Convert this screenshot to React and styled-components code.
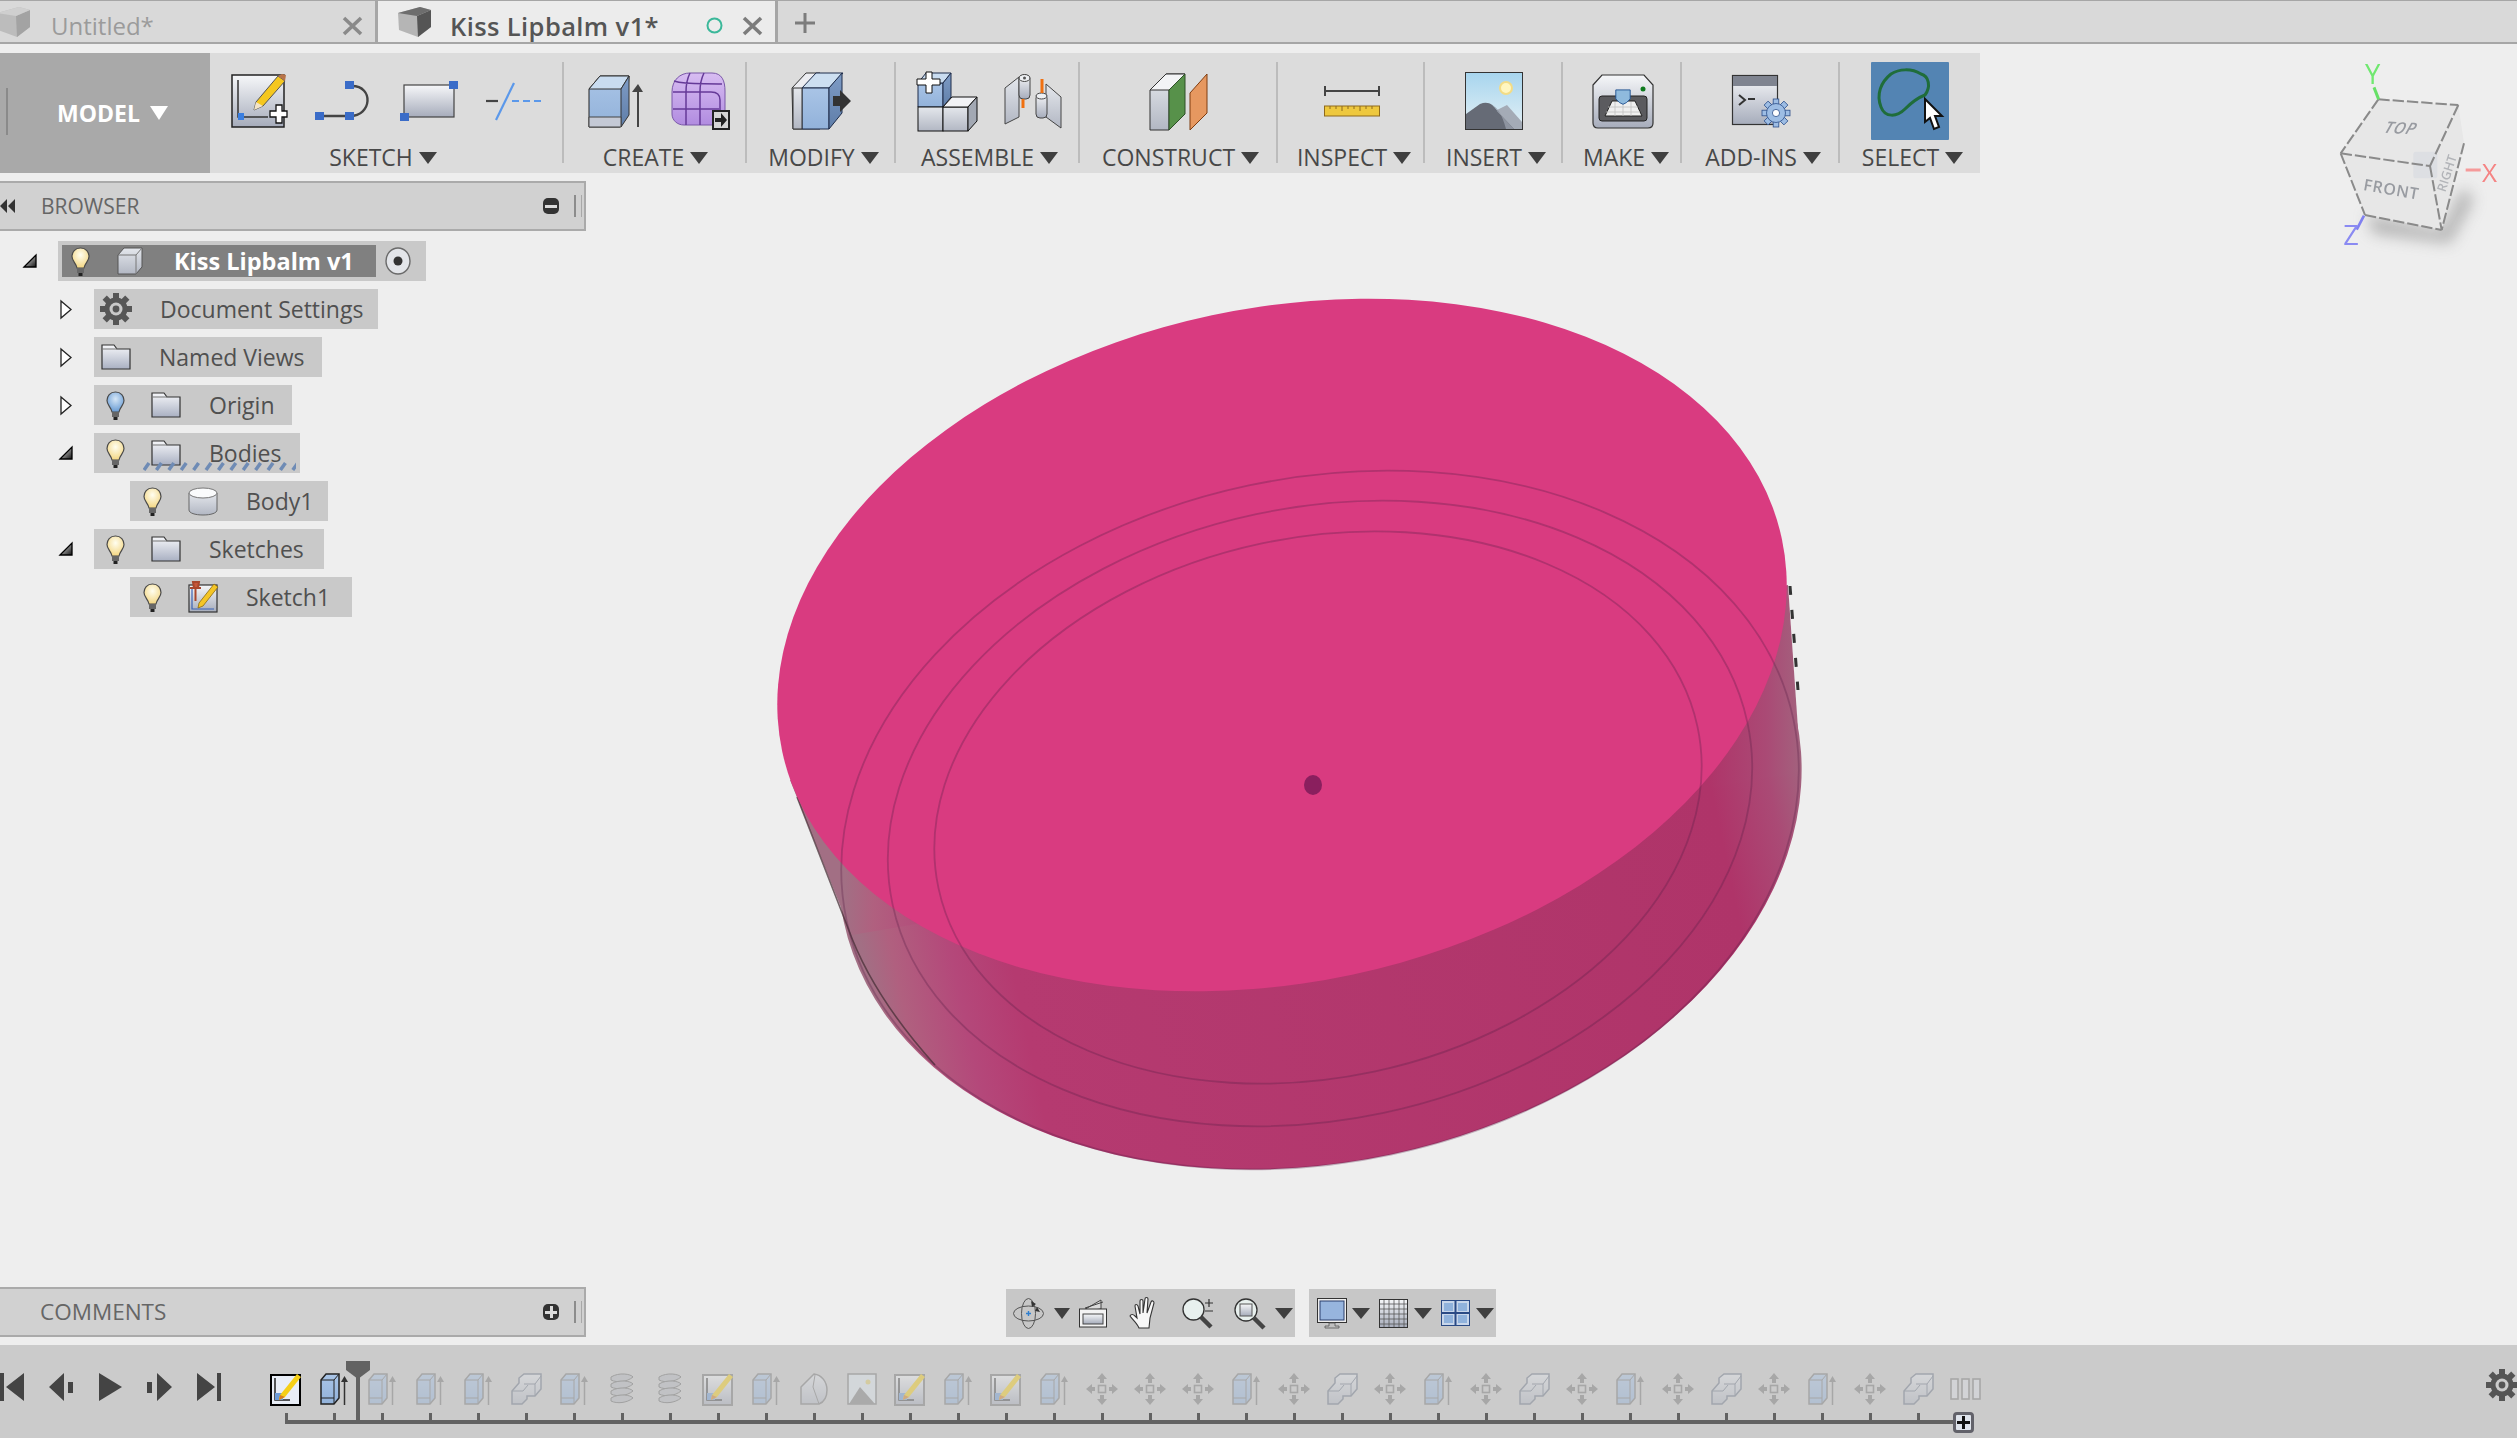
import React from "react";
import styled, { createGlobalStyle } from "styled-components";

const Global = createGlobalStyle`
  html, body { margin: 0; padding: 0; background: #eeeeee; }
  body { font-family: "Open Sans", "Liberation Sans", sans-serif; }
`;

const Page = styled.div`
  width: 2517px; height: 1438px; overflow: hidden; background: #eeeeee;
  display: flex; flex-direction: column; position: relative;
`;
const Ico = styled.svg`display: block; flex: none; overflow: visible;`;
const Hidden = styled.svg`position: absolute; width: 0; height: 0;`;

/* ---------- tabs ---------- */
const TabBar = styled.div`
  height: 44px; box-sizing: border-box; display: flex; flex: none;
  background: #d9d9d9; border-top: 1px solid #a6a6a6; border-bottom: 2px solid #a6a6a6;
`;
const Tab = styled.div`
  width: ${p => p.$w}px; box-sizing: border-box; display: flex; align-items: center;
  padding-left: ${p => p.$pl}px; border-right: 3px solid #a6a6a6;
  background: ${p => (p.$active ? "#ececec" : "#d9d9d9")};
`;
const TabTitle = styled.span`
  font-size: ${p => (p.$active ? 25.5 : 24)}px; line-height: 30px; margin-left: ${p => p.$ml}px; margin-top: 8px;
  color: ${p => (p.$active ? "#555555" : "#9b9b9b")};
  font-weight: ${p => (p.$active ? 600 : 400)};
  letter-spacing: ${p => (p.$active ? "0.4px" : "0")};
`;
const TabRight = styled.div`margin-left: auto; margin-top: 8px; display: flex; align-items: center; gap: 19px; padding-right: ${p => p.$pr}px;`;
const AddTab = styled.div`padding: 3px 0 0 17px; display: flex; align-items: center;`;

/* ---------- workspace ---------- */
const Workspace = styled.div`flex: 1; display: flex; flex-direction: column; position: relative; min-height: 0;`;
const ModelCanvas = styled.svg`position: absolute; left: 760px; top: 236px; width: 1060px; height: 940px;`;
const CubeCanvas = styled.svg`position: absolute; right: 0; top: 6px; width: 217px; height: 210px;`;

const Toolbar = styled.div`
  margin-top: 9px; width: 1980px; height: 120px; flex: none; display: flex; background: #dcdcdc;
`;
const ModelButton = styled.div`
  width: 210px; background: #a9a9a9; position: relative; display: flex; align-items: center;
  padding-left: 57px; box-sizing: border-box; gap: 10px;
  color: #fff; font-size: 23px; font-weight: 700; line-height: 30px;
  &::before { content: ""; position: absolute; left: 6px; top: 35px; height: 47px; width: 2px; background: #8a8a8a; }
`;
const Tri = styled.span`
  display: inline-block; flex: none; width: 0; height: 0;
  border-left: ${p => (p.$w || 18) / 2}px solid transparent;
  border-right: ${p => (p.$w || 18) / 2}px solid transparent;
  border-top: ${p => p.$h || 12}px solid ${p => p.$c || "#3f3f3f"};
`;
const Group = styled.div`
  width: ${p => p.$w}px; box-sizing: border-box; position: relative; display: flex; flex-direction: column;
  padding-top: 9px;
  &::after { content: ""; display: ${p => (p.$last ? "none" : "block")}; position: absolute; right: 0; top: 9px; height: 101px; width: 2px; background: #bcbcbc; }
`;
const IconRow = styled.div`
  height: 78px; display: flex; align-items: center; justify-content: center; gap: ${p => p.$gap || 28}px;
  padding-left: ${p => p.$pl || 0}px;
`;
const GroupLabel = styled.div`
  height: 33px; display: flex; align-items: center; justify-content: center; gap: 6px;
  font-size: 23px; line-height: 33px; color: #484848; padding-top: 2px; box-sizing: border-box;
  padding-right: ${p => p.$pr || 0}px; padding-left: ${p => p.$lp || 0}px;
`;
const SelectTile = styled.div`width: 78px; height: 78px; background: #5384b3; border-radius: 1px;`;

/* ---------- panels ---------- */
const Panel = styled.div`
  width: 586px; height: 50px; box-sizing: border-box; flex: none; display: flex; align-items: center;
  margin-top: ${p => p.$mt || 0}px; padding-right: 2px;
  background: #d1d1d1; border: 2px solid #aaaaaa; border-left: none;
`;
const PanelTitle = styled.span`font-size: ${p => p.$fs || 21}px; line-height: 28px; color: #666666; margin-left: ${p => p.$ml}px;`;
const Pill = styled.div`
  margin-left: auto; width: 16px; height: 16px; border-radius: 5px; background: #333333; position: relative; flex: none;
  &::before { content: ""; position: absolute; left: 2px; right: 2px; top: 6.5px; height: 3px; background: #dcdcdc; }
  &::after { content: ""; display: ${p => (p.$plus ? "block" : "none")}; position: absolute; left: 6.5px; width: 3px; top: 2px; bottom: 2px; background: #dcdcdc; }
`;
const Grip = styled.div`
  width: 5px; height: 22px; margin-left: 15px; border-left: 2px solid #8c8c8c; border-right: 1px solid #a8a8a8; flex: none;
`;
const Tree = styled.div`margin-top: 10px; display: flex; flex-direction: column; gap: 8px;`;
const TreeLine = styled.div`display: flex; align-items: center; height: 40px; padding-left: ${p => 23 + 36 * p.$level}px;`;
const ToggleSlot = styled.div`width: 35px; flex: none;`;
const Row = styled.div`
  width: ${p => p.$w}px; height: 40px; box-sizing: border-box; background: #c9c9c9;
  display: flex; align-items: center; gap: 26px; padding-left: ${p => p.$pl ?? 12}px; position: relative;
`;
const RowText = styled.span`
  font-size: 23px; line-height: 30px; color: #505050; margin-left: 2px; white-space: nowrap;
`;
const RootRow = styled.div`
  width: 368px; height: 40px; box-sizing: border-box; background: #c9c9c9; display: flex; align-items: center;
  gap: 9px; padding-left: 4px;
`;
const RootInner = styled.div`
  width: 314px; height: 32px; box-sizing: border-box; background: #808080; display: flex; align-items: center;
  gap: 27px; padding-left: 9px;
`;
const RootText = styled.span`font-size: 23.5px; line-height: 30px; font-weight: 700; color: #ffffff; margin-left: 4px; white-space: nowrap;`;
const Squiggle = styled.svg`position: absolute; left: 49px; top: 28px; width: 153px; height: 10px;`;

/* ---------- bottom of workspace ---------- */
const Grow = styled.div`flex: 1;`;
const BottomRow = styled.div`display: flex; align-items: flex-end; margin-bottom: 8px; flex: none;`;
const NavBars = styled.div`display: flex; gap: 14px; margin-left: 420px;`;
const NavGroup = styled.div`
  width: ${p => p.$w}px; height: 48px; background: #c7c7c7; display: flex; align-items: center; box-sizing: border-box;
  padding-left: ${p => p.$pl}px;
`;
const NavItem = styled.div`margin-left: ${p => p.$ml || 0}px; display: flex; align-items: center;`;

/* ---------- timeline ---------- */
const Timeline = styled.div`
  height: 93px; flex: none; background: #cbcbcb; box-sizing: border-box; padding-top: 28px; display: flex; align-items: flex-start;
`;
const Controls = styled.div`width: 262px; flex: none; display: flex; gap: 25px; height: 28px;`;
const Track = styled.div`
  display: flex; position: relative; width: 1728px; height: 51px; flex: none;
  &::after { content: ""; position: absolute; left: 23px; right: 37px; bottom: 0; height: 4px; background: #626262; }
`;
const Cell = styled.div`
  width: 48px; flex: none; display: flex; flex-direction: column; align-items: center;
`;
const CellIcon = styled.div`height: 32px; display: flex; align-items: center; opacity: ${p => (p.$ghost ? 0.42 : 1)};`;
const Tick = styled.div`width: 3px; height: 11px; margin-top: 8px; background: #626262; visibility: ${p => (p.$hide ? "hidden" : "visible")};`;
const Playhead = styled.svg`position: absolute; left: 84px; top: -12px; width: 24px; height: 62px; z-index: 2;`;
const PlusHandle = styled.div`
  position: absolute; left: 1691px; top: 39px; width: 21px; height: 21px; box-sizing: border-box;
  border: 3px solid #62626a; border-radius: 4px; background: #dfe4ec; z-index: 2;
  &::before { content: ""; position: absolute; left: 1px; right: 1px; top: 6px; height: 3px; background: #111; }
  &::after { content: ""; position: absolute; top: 1px; bottom: 1px; left: 6px; width: 3px; background: #111; }
`;
const TimelineGear = styled.div`margin-left: auto; margin-right: -1px; margin-top: -4px;`;

/* ---------- shared defs ---------- */
const Defs = () => (
  <Hidden>
    <defs>
      <linearGradient id="gFace" x1="0" y1="0" x2="0" y2="1"><stop offset="0" stopColor="#f6f7f9" /><stop offset="1" stopColor="#a6acbb" /></linearGradient>
      <linearGradient id="gFolder" x1="0" y1="0" x2="0" y2="1"><stop offset="0" stopColor="#f6f7fa" /><stop offset="1" stopColor="#a9b0c2" /></linearGradient>
      <linearGradient id="gBlue" x1="0" y1="0" x2="0" y2="1"><stop offset="0" stopColor="#a9c4e6" /><stop offset="1" stopColor="#92b2da" /></linearGradient>
      <linearGradient id="gBlueSide" x1="0" y1="0" x2="0" y2="1"><stop offset="0" stopColor="#7f9cc6" /><stop offset="1" stopColor="#5f7ea9" /></linearGradient>
      <linearGradient id="gGrey" x1="0" y1="0" x2="0" y2="1"><stop offset="0" stopColor="#e4e7ec" /><stop offset="1" stopColor="#b2b7c3" /></linearGradient>
      <linearGradient id="gPurple" x1="0" y1="0" x2="0" y2="1"><stop offset="0" stopColor="#d8bdf2" /><stop offset="1" stopColor="#b18ce0" /></linearGradient>
      <linearGradient id="gTri" x1="0" y1="0" x2="1" y2="1"><stop offset="0" stopColor="#ffffff" /><stop offset="1" stopColor="#111111" /></linearGradient>
      <linearGradient id="gSky" x1="0" y1="0" x2="0" y2="1"><stop offset="0" stopColor="#a7d5ee" /><stop offset="1" stopColor="#e4f0f5" /></linearGradient>
      <radialGradient id="gBulb" cx=".5" cy=".35" r=".6"><stop offset="0" stopColor="#fffef0" /><stop offset="1" stopColor="#f4d98a" /></radialGradient>
      <radialGradient id="gBulbB" cx=".5" cy=".35" r=".6"><stop offset="0" stopColor="#d5e6f6" /><stop offset="1" stopColor="#6fa0d6" /></radialGradient>
      <linearGradient id="gSide" gradientUnits="userSpaceOnUse" x1="845" y1="0" x2="1805" y2="0">
        <stop offset="0" stopColor="#a26f84" /><stop offset=".03" stopColor="#b0607f" /><stop offset=".09" stopColor="#b4487a" />
        <stop offset=".15" stopColor="#b53a70" /><stop offset=".9" stopColor="#af3469" /><stop offset=".96" stopColor="#aa4a75" /><stop offset="1" stopColor="#a2657f" />
      </linearGradient>
      <filter id="blur12" x="-50%" y="-50%" width="200%" height="200%"><feGaussianBlur stdDeviation="22" /></filter>
      <filter id="blur1"><feGaussianBlur stdDeviation="1.500" /></filter>
    </defs>
  </Hidden>
);

/* ---------- small helpers ---------- */
const CloseX = ({ c = "#7c7c7c" }) => (
  <Ico width="21" height="18" viewBox="0 0 21 18"><path d="M2 1l17 16M19 1L2 17" stroke={c} strokeWidth="3.6" fill="none" /></Ico>
);
const TabCube = ({ dim, w = 33 }) => (
  <Ico width={w} height="31" viewBox={`${33 - w} 0 ${w} 31`}>
    <path d="M0 7L22 1l11 3v17L20 31 1 24z" fill={dim ? "#bcbcbc" : "#b5b5b5"} />
    <path d="M19 10l14-6v17L20 31z" fill={dim ? "#a3a3a3" : "#555555"} />
    <path d="M0 7l19 3 14-6-11-3z" fill={dim ? "#cfcfcf" : "#6d6d6d"} />
  </Ico>
);
const Gear = ({ size = 32, fill = "#565656", hole = "#c9c9c9" }) => (
  <Ico width={size} height={size} viewBox="-16 -16 32 32">
    {[0, 45, 90, 135, 180, 225, 270, 315].map(a => (<rect key={a} x="-3" y="-16" width="6" height="7" fill={fill} transform={`rotate(${a})`} />))}
    <circle r="11.5" fill={fill} /><circle r="6.5" fill={hole} /><circle r="3.4" fill={fill} />
  </Ico>
);
const Bulb = ({ blue }) => (
  <Ico width="19" height="29" viewBox="0 0 19 29">
    <path d="M9.5 1C4 1 1 5 1 9.5 1 14 5 16 6 21h7c1-5 5-7 5-11.500C18 5 15 1 9.500 1z" fill={blue ? "url(#gBulbB)" : "url(#gBulb)"} stroke="#4a4a4a" strokeWidth="1.2" />
    <rect x="6" y="21" width="7" height="5" fill="#666" /><rect x="7.500" y="26" width="4" height="3" fill="#222" />
  </Ico>
);
const Folder = () => (
  <Ico width="30" height="26" viewBox="0 0 30 26">
    <path d="M1 25V1h12l3 4h13v20z" fill="url(#gFolder)" stroke="#333" strokeWidth="1.200" />
    <path d="M1 5h15" stroke="#777" strokeWidth="1" fill="none" />
  </Ico>
);
const Open = () => (<Ico width="14" height="14" viewBox="0 0 14 14"><path d="M1 13L13 1v12z" fill="url(#gTri)" stroke="#000" strokeWidth="1.300" /></Ico>);
const Closed = () => (<Ico width="13" height="19" viewBox="0 0 13 19"><path d="M2 1l10 8.500L2 18z" fill="#fff" stroke="#222" strokeWidth="1.300" /></Ico>);
const TreeCube = () => (
  <Ico width="26" height="28" viewBox="0 0 26 28">
    <path d="M1 8l6-7h18v19l-6 7H1z" fill="url(#gGrey)" stroke="#555" strokeWidth="1" />
    <path d="M1 8h18V27M19 8l6-7" stroke="#777" fill="none" strokeWidth="1" />
  </Ico>
);
const Cylinder = () => (
  <Ico width="30" height="29" viewBox="0 0 30 29">
    <path d="M1 6v17c0 3 6 5 14 5s14-2 14-5V6z" fill="url(#gGrey)" stroke="#666" strokeWidth="1" />
    <ellipse cx="15" cy="6" rx="14" ry="5" fill="#fafbfc" stroke="#777" strokeWidth="1" />
  </Ico>
);
const TreeSketch = () => (
  <Ico width="30" height="32" viewBox="0 0 30 32">
    <rect x="1" y="4" width="28" height="27" fill="url(#gFace)" stroke="#333" strokeWidth="1.200" />
    <path d="M4 6v22h22" stroke="#3a63b5" strokeWidth="1.200" fill="none" />
    <path d="M11 22L26 3l4 3-15 19-5 2z" fill="#f4c526" stroke="#8a6a10" strokeWidth=".8" />
    <path d="M2 7h11M5 1h6l-1 6H6zM7.500 8v12" stroke="#a9472d" strokeWidth="2" fill="#c8583a" />
  </Ico>
);
const Radio = () => (
  <Ico width="26" height="28" viewBox="0 0 26 28">
    <ellipse cx="13" cy="14" rx="12" ry="13" fill="#e3e5e9" stroke="#6a6a6a" strokeWidth="1.400" />
    <circle cx="13" cy="14" r="4.500" fill="#333" />
  </Ico>
);

/* ---------- toolbar icons ---------- */
const Sq = ({ x, y }) => <rect x={x} y={y} width="9" height="8" fill="#3a6cc8" />;
const IconNewSketch = () => (
  <Ico width="56" height="54" viewBox="0 0 56 54">
    <rect x="1" y="1" width="52" height="52" fill="url(#gFace)" stroke="#222" strokeWidth="1.500" />
    <path d="M7 6v37h30" stroke="#333" strokeWidth="1.500" fill="none" />
    <rect x="7" y="39" width="6" height="7" fill="#3a7ee0" />
    <path d="M25 28L47 2l7 5-22 25-9 4z" fill="#f5c71f" stroke="#555" strokeWidth="1" />
    <path d="M47 2l7 5 1-6-4-1z" fill="#b8744a" />
    <path d="M25 28l7 4-9 4z" fill="#f3e4c8" />
    <path d="M39 37h6v-6h6v6h5v6h-5v6h-6v-6h-6z" fill="#fff" stroke="#111" strokeWidth="1.300" />
  </Ico>
);
const IconSpline = () => (
  <Ico width="57" height="40" viewBox="0 0 57 40">
    <path d="M5 35h30c22 0 24-30 2-30" stroke="#444" strokeWidth="2.400" fill="none" />
    <Sq x={0} y={31} /><Sq x={30} y={31} /><Sq x={30} y={0} />
  </Ico>
);
const IconRect = () => (
  <Ico width="58" height="40" viewBox="0 0 58 40">
    <rect x="4" y="4" width="50" height="32" fill="url(#gFace)" stroke="#444" strokeWidth="1.200" />
    <Sq x={0} y={32} /><Sq x={49} y={0} />
  </Ico>
);
const IconLine = () => (
  <Ico width="58" height="37" viewBox="0 0 58 37">
    <path d="M0 18h12" stroke="#444" strokeWidth="2.200" />
    <path d="M28 0L10 37" stroke="#5b98ea" strokeWidth="2.200" />
    <path d="M26 18h32" stroke="#5b98ea" strokeWidth="2.200" strokeDasharray="7 4" />
  </Ico>
);
const IconExtrude = () => (
  <Ico width="55" height="53" viewBox="0 0 55 53">
    <path d="M1 14L12 1h29L38 42l-6 10H1z" fill="url(#gBlue)" stroke="#222" strokeWidth="1" />
    <path d="M1 14h32l8-13H12z" fill="#c9dcf0" stroke="#333" strokeWidth="1" />
    <path d="M33 14l8-13v39l-8 12z" fill="url(#gBlueSide)" stroke="#333" strokeWidth="1" />
    <path d="M1 42h32v10H1z" fill="#c4c9d5" stroke="#444" strokeWidth="1" />
    <path d="M50 52V14" stroke="#444" strokeWidth="2" /><path d="M44 17l6-8 5 8z" fill="#444" />
  </Ico>
);
const IconForm = () => (
  <Ico width="58" height="58" viewBox="0 0 58 58">
    <path d="M0 20C0 8 8 1 18 1h22c10 0 13 8 13 18v24c0 6-5 10-12 10H12C5 53 0 48 0 42z" fill="url(#gPurple)" stroke="#7a58a8" strokeWidth="1" />
    <path d="M1 20h38c6 0 9 3 9 8v25M1 37h46M18 1c-3 6-4 12-4 19v33M32 1c-3 6-4 12-4 19v33M2 9c12 4 30 2 48 3" stroke="#653a98" strokeWidth="1.500" fill="none" />
    <rect x="41" y="39" width="16" height="18" fill="#d5d5d5" stroke="#222" strokeWidth="2" />
    <path d="M43 46h6v-5l6 7-6 7v-5h-6z" fill="#222" />
  </Ico>
);
const IconModify = () => (
  <Ico width="59" height="58" viewBox="0 0 59 58">
    <path d="M0 16L14 1h14v56H1z" fill="#ecedf1" stroke="#333" strokeWidth="1" />
    <path d="M10 16h27l14-15H24z" fill="#cddff1" stroke="#1e2c4a" strokeWidth="1" />
    <path d="M10 16h27v41H10z" fill="url(#gBlue)" stroke="#1e2c4a" strokeWidth="1" />
    <path d="M37 16L50 1v40L37 57z" fill="url(#gBlueSide)" stroke="#1e2c4a" strokeWidth="1" />
    <path d="M41 24h7v-6l11 11-11 11v-6h-7z" fill="#333" />
    <path d="M1 16h9v41H1z" fill="url(#gGrey)" stroke="#333" strokeWidth="1" />
  </Ico>
);
const IconAssemble = () => (
  <Ico width="61" height="61" viewBox="0 0 61 61">
    <path d="M2 12h25v24H2z" fill="url(#gBlue)" stroke="#1e2c4a" strokeWidth="1" />
    <path d="M2 12l8-10h25l-8 10z" fill="#c9dcf0" stroke="#1e2c4a" strokeWidth="1" />
    <path d="M27 12l8-10v24l-8 10z" fill="url(#gBlueSide)" stroke="#1e2c4a" strokeWidth="1" />
    <rect x="2" y="36" width="25" height="24" fill="url(#gGrey)" stroke="#111" strokeWidth="1" />
    <rect x="27" y="36" width="25" height="24" fill="url(#gGrey)" stroke="#111" strokeWidth="1" />
    <path d="M27 36l9-10h25l-9 10z" fill="#f2f3f6" stroke="#111" strokeWidth="1" />
    <path d="M52 36l9-10v24l-9 10z" fill="#a2a8b3" stroke="#111" strokeWidth="1" />
    <path d="M1 8h9V1h6v7h8v6h-8v8h-6v-8H1z" fill="#fff" stroke="#111" strokeWidth="1" />
  </Ico>
);
const IconJoint = () => (
  <Ico width="56" height="54" viewBox="0 0 56 54">
    <path d="M0 14L14 3v40L0 50z" fill="url(#gGrey)" stroke="#444" strokeWidth="1" />
    <rect x="14" y="1" width="11" height="24" rx="4" fill="url(#gFace)" stroke="#444" strokeWidth="1" />
    <ellipse cx="19.500" cy="4" rx="5.500" ry="3.500" fill="#eef0f3" stroke="#444" strokeWidth="1" /><circle cx="19.500" cy="4" r="1.500" fill="#555" />
    <path d="M18 25v9" stroke="#f07010" strokeWidth="3" />
    <path d="M41 10l15 13v31L41 43z" fill="url(#gGrey)" stroke="#444" strokeWidth="1" />
    <rect x="31" y="20" width="11" height="24" rx="4" fill="url(#gFace)" stroke="#444" strokeWidth="1" />
    <ellipse cx="36.500" cy="22" rx="5.500" ry="3" fill="#eef0f3" stroke="#444" strokeWidth="1" />
    <path d="M37 5v14" stroke="#f07010" strokeWidth="3" />
  </Ico>
);
const IconConstruct = () => (
  <Ico width="58" height="57" viewBox="0 0 58 57">
    <path d="M0 17L16 1h19L19 17v40H0z" fill="url(#gGrey)" stroke="#333" strokeWidth="1" />
    <path d="M0 17L16 1h19L19 17z" fill="#f3f4f6" stroke="#333" strokeWidth="1" />
    <path d="M19 17L35 1v40L19 57z" fill="#57914a" stroke="#2e4f27" strokeWidth="1" />
    <path d="M40 20L57 1v39L40 57z" fill="#e69860" stroke="#7f3c10" strokeWidth="1" />
  </Ico>
);
const IconInspect = () => (
  <Ico width="56" height="31" viewBox="0 0 56 31">
    <path d="M1 0v10M55 0v10M1 5h54" stroke="#444" strokeWidth="2" fill="none" />
    <rect x="0.500" y="20" width="55" height="10" fill="#eec83e" stroke="#8f6a1c" strokeWidth="1" />
    <path d="M6 20v3M12 20v3M18 20v5M24 20v3M30 20v3M36 20v5M42 20v3M48 20v3" stroke="#8f6a1c" strokeWidth="1" />
  </Ico>
);
const IconInsert = () => (
  <Ico width="58" height="58" viewBox="0 0 58 58">
    <rect x="0.500" y="0.500" width="57" height="57" fill="url(#gSky)" stroke="#333" strokeWidth="1" />
    <circle cx="41" cy="16" r="6" fill="#fff6c0" stroke="#f3dc86" strokeWidth="2" />
    <path d="M32 38l10-5 15 17v7H40z" fill="#a4abb6" />
    <path d="M1 42l14-10c8-3 13 0 18 8l16 17H1z" fill="#666b76" />
    <path d="M27 32c6 5 10 10 14 25h8L33 40c-2-4-4-6-6-8z" fill="#8e94a0" />
  </Ico>
);
const IconMake = () => (
  <Ico width="60" height="55" viewBox="0 0 60 55">
    <path d="M0 11L9 1h42l9 10v38c0 3-2 5-5 5H5c-3 0-5-2-5-5z" fill="url(#gFace)" stroke="#333" strokeWidth="1.200" />
    <rect x="6" y="22" width="48" height="25" rx="3" fill="#5b5b5f" stroke="#222" strokeWidth="1" />
    <path d="M12 42l7-15h23l7 15z" fill="#efefef" stroke="#222" strokeWidth="1" />
    <path d="M22 28v14M30 28v14M38 28v14M15 33h30M13 38h34" stroke="#c0c0c0" strokeWidth=".8" />
    <path d="M22 21h16v10l-4 4-4 2-4-2-4-4z" fill="#8fbadd" stroke="#1d4f90" strokeWidth="1" transform="translate(3 -3) scale(.9)" />
    <circle cx="50" cy="15" r="2.500" fill="#0e7a1e" />
  </Ico>
);
const IconAddIns = () => (
  <Ico width="58" height="53" viewBox="0 0 58 53">
    <rect x="0.500" y="0.500" width="45" height="49" fill="url(#gFace)" stroke="#333" strokeWidth="1.200" />
    <rect x="1" y="1" width="44" height="10" fill="#7f8490" />
    <path d="M7 20l6 5-6 5M16 24h7" stroke="#333" strokeWidth="2" fill="none" />
    <g transform="translate(44 38)">
      {[0, 45, 90, 135, 180, 225, 270, 315].map(a => (<rect key={a} x="-2.800" y="-14" width="5.600" height="7" fill="#9dbde4" stroke="#2d4f8a" strokeWidth=".8" transform={`rotate(${a})`} />))}
      <circle r="9.500" fill="#9dbde4" stroke="#2d4f8a" strokeWidth=".8" /><circle r="3.600" fill="#fff" stroke="#2d4f8a" strokeWidth=".8" />
    </g>
  </Ico>
);
const IconSelect = () => (
  <SelectTile>
    <Ico width="78" height="78" viewBox="0 0 78 78">
      <path d="M54 33c6-8 4-19-4-21-10-6-22-5-30 0C10 20 5 32 10 45c4 11 16 10 24 2 6-6 12-11 20-14z" fill="none" stroke="#1f6d3a" strokeWidth="3" />
      <path d="M54 37v23l5-4 4 11 5-2-4-11h7z" fill="#fff" stroke="#111" strokeWidth="2" />
    </Ico>
  </SelectTile>
);

/* ---------- nav icons ---------- */
const NavOrbit = () => (
  <Ico width="31" height="31" viewBox="0 0 31 31">
    <ellipse cx="15.500" cy="15.500" rx="15" ry="7.500" fill="none" stroke="#555" strokeWidth="1" />
    <ellipse cx="15.500" cy="15.500" rx="7" ry="15" fill="none" stroke="#555" strokeWidth="1" />
    <path d="M13 15.500h5M15.500 13v5" stroke="#2f7fd0" strokeWidth="1.400" />
    <path d="M18 3l5 3-4 3zM24 9l3 5-5-1z" fill="#333" />
  </Ico>
);
const NavLook = () => (
  <Ico width="28" height="29" viewBox="0 0 28 29">
    <path d="M3 12L22 1v9L6 12zM6 9l18-6" stroke="#444" fill="#dadada" strokeWidth="1" />
    <rect x="0.500" y="10" width="27" height="18" fill="#f3f3f3" stroke="#333" strokeWidth="1" />
    <rect x="4" y="15" width="20" height="10" fill="url(#gFace)" stroke="#444" strokeWidth="1" />
  </Ico>
);
const NavHand = () => (
  <Ico width="30" height="31" viewBox="0 0 30 31">
    <path d="M9 30c-2-5-6-8-9-12 1-2 3-2 5 0l2 2L5 8c0-2 2-2 3 0l2 8V3c0-2 3-2 3 0v12l2-14c0-2 3-2 3 0l-1 14 4-11c1-2 3-1 3 1l-4 15-1 10z" fill="#f7f7f7" stroke="#333" strokeWidth="1.100" />
  </Ico>
);
const NavZoom = () => (
  <Ico width="31" height="31" viewBox="0 0 31 31">
    <circle cx="11.500" cy="11.500" r="10.500" fill="#e8f0ee" stroke="#333" strokeWidth="1.300" />
    <path d="M19 19l10 10" stroke="#444" strokeWidth="4.500" />
    <path d="M23 5h8M27 1v8M23 13h8" stroke="#333" strokeWidth="1.200" />
  </Ico>
);
const NavZoomWin = () => (
  <Ico width="31" height="31" viewBox="0 0 31 31">
    <circle cx="12" cy="12" r="11" fill="#e8f0ee" stroke="#333" strokeWidth="1.300" />
    <rect x="6" y="6" width="12" height="12" fill="url(#gFace)" stroke="#555" strokeWidth="1" />
    <path d="M20 20l10 10" stroke="#444" strokeWidth="4.500" />
  </Ico>
);
const NavMonitor = () => (
  <Ico width="30" height="31" viewBox="0 0 30 31">
    <rect x="0.500" y="0.500" width="29" height="24" fill="#eeeeee" stroke="#333" strokeWidth="1" />
    <rect x="3" y="3" width="24" height="19" fill="#97b5de" stroke="#2a3f6c" strokeWidth="1" />
    <path d="M12 25h6v3h4v2H8v-2h4z" fill="#c0c0c0" stroke="#555" strokeWidth=".8" />
  </Ico>
);
const NavGrid = () => (
  <Ico width="29" height="29" viewBox="0 0 29 29">
    <rect x="0.500" y="0.500" width="28" height="28" fill="url(#gFace)" stroke="#333" strokeWidth="1" />
    <path d="M5 1v27M10 1v27M15 1v27M20 1v27M25 1v27M1 5h27M1 10h27M1 15h27M1 20h27M1 25h27" stroke="#555" strokeWidth=".8" />
  </Ico>
);
const NavViews = () => (
  <Ico width="29" height="26" viewBox="0 0 29 26">
    <rect x="0.500" y="0.500" width="28" height="25" fill="#c8d6ea" stroke="#2a4a85" strokeWidth="1" />
    <path d="M14.500 0v26M0 13h29" stroke="#2a4a85" strokeWidth="2" />
    <g fill="#90b2dc"><rect x="3" y="3" width="9" height="8" /><rect x="17" y="3" width="9" height="8" /><rect x="3" y="15" width="9" height="8" /><rect x="17" y="15" width="9" height="8" /></g>
  </Ico>
);

/* ---------- timeline icons ---------- */
const TSketch = ({ active }) => (
  <Ico width="32" height="33" viewBox="0 0 32 33">
    <rect x="1" y="2" width="29" height="30" fill={active ? "#e9eef7" : "url(#gFace)"} stroke={active ? "#000" : "#777"} strokeWidth="2" />
    <path d="M5 5v22h15" stroke="#222" strokeWidth="1.500" fill="none" />
    <rect x="5" y="20" width="8" height="7" fill="#6c9bd8" />
    <path d="M10 22L27 1l4 3-16 20-6 3z" fill="#f6cf16" />
    <path d="M10 22l5 2-6 3z" fill="#d87c1c" />
  </Ico>
);
const TExtrude = ({ active }) => (
  <Ico width="28" height="32" viewBox="0 0 28 32">
    <path d="M1 7l5-6h13v24l-5 6H1z" fill="url(#gBlue)" stroke={active ? "#222" : "#777"} strokeWidth="1.500" />
    <path d="M1 7h13l5-6M14 7v24M1 25h13" stroke={active ? "#222" : "#777"} fill="none" strokeWidth="1" />
    <path d="M24.500 32V6" stroke={active ? "#333" : "#777"} strokeWidth="1.500" /><path d="M21 9l3.500-6L28 9z" fill={active ? "#333" : "#777"} />
  </Ico>
);
const TCombine = () => (
  <Ico width="31" height="32" viewBox="0 0 31 32">
    <path d="M1 18l7-8V5l5-4h17v15l-6 7h-8v3l-5 5H1z" fill="url(#gGrey)" stroke="#6a7486" strokeWidth="1.500" />
    <path d="M13 11h11v12M24 11l6-8M1 18h11l5-6" stroke="#6a7486" fill="none" strokeWidth="1" />
  </Ico>
);
const TCoil = () => (
  <Ico width="26" height="32" viewBox="0 0 26 32">
    {[4, 11, 18, 25].map(y => (<path key={y} d={`M2 ${y}c8-5 20-3 22 0-6 5-16 6-22 3z`} fill="#b5b8bd" stroke="#666" strokeWidth="1" />))}
  </Ico>
);
const TRevolve = () => (
  <Ico width="28" height="32" viewBox="0 0 28 32">
    <path d="M1 14L14 1c8 1 13 8 13 16 0 7-3 12-8 14H1z" fill="url(#gGrey)" stroke="#777" strokeWidth="1.500" />
    <path d="M15 2l-2 12 6 17" stroke="#777" fill="none" strokeWidth="1" />
  </Ico>
);
const TImage = () => (
  <Ico width="30" height="32" viewBox="0 0 30 32">
    <rect x="1" y="1" width="28" height="30" fill="#dfe8ef" stroke="#777" strokeWidth="1.500" />
    <path d="M2 31l11-17 15 17z" fill="#7d7d7d" /><circle cx="21" cy="9" r="2.500" fill="#e2cc66" />
  </Ico>
);
const TMove = () => (
  <Ico width="32" height="32" viewBox="0 0 32 32" fill="#777">
    <path d="M16 0l5 6h-3v4h-4V6h-3zM16 32l5-6h-3v-4h-4v4h-3zM0 16l6-5v3h3v4H6v3zM32 16l-6-5v3h-3v4h3v3z" />
    <rect x="12.500" y="12.500" width="7" height="7" fill="none" stroke="#777" strokeWidth="1.600" />
  </Ico>
);
const TDots = () => (
  <Ico width="32" height="22" viewBox="0 0 32 22">
    {[1, 12, 23].map(x => <rect key={x} x={x} y="1" width="7" height="20" fill="#dde0e6" stroke="#777" strokeWidth="1.600" />)}
  </Ico>
);

/* ---------- view cube ---------- */
const ViewCube = () => (
  <CubeCanvas viewBox="0 0 651 630" fontFamily="Open Sans, sans-serif">
    <path d="M200 495l225 45 65-130 30 40-70 130-230-30z" fill="#777" opacity=".5" filter="url(#blur12)" />
    <g filter="url(#blur1)">
      <path d="M235 148L475 165 492 280 425 540 195 495 122 310z" fill="#e7e7e7" />
      <rect x="340" y="305" width="72" height="80" rx="8" fill="#dddfe3" />
      <g fill="none" stroke="#8a8a8a" strokeWidth="6" strokeDasharray="34 9">
        <path d="M235 148L475 165" /><path d="M235 148L122 310" /><path d="M122 310L390 348" /><path d="M475 165L390 348" />
        <path d="M122 310L195 495" /><path d="M195 495L425 540" /><path d="M390 348L425 540" /><path d="M492 280L425 540" />
      </g>
      <text transform="translate(250 248) rotate(3) skewX(-16)" fontSize="48" fontWeight="600" fontStyle="italic" fill="#989ba1" letterSpacing="2">TOP</text>
      <text transform="translate(188 420) rotate(10)" fontSize="48" fontWeight="600" fill="#989ba1" letterSpacing="2">FRONT</text>
      <text transform="translate(436 428) rotate(-72)" fontSize="38" fontWeight="600" fill="#b2b4b8">RIGHT</text>
      <path d="M222 112l14 36" stroke="#66e066" strokeWidth="9" />
      <path d="M497 360h45" stroke="#f59a9a" strokeWidth="9" />
      <path d="M192 497l-22 42" stroke="#8080f0" strokeWidth="8" />
      <text x="195" y="103" fontSize="82" fill="#70e870">Y</text>
      <text x="546" y="396" fontSize="78" fill="#f58484">X</text>
      <text x="130" y="586" fontSize="82" fill="#8a8af2">Z</text>
    </g>
  </CubeCanvas>
);

/* ---------- model ---------- */
const ModelDrawing = () => (
  <ModelCanvas viewBox="760 280 1060 940">
    <ellipse cx="1320" cy="820" rx="487" ry="342" transform="rotate(-12 1320 820)" fill="url(#gSide)" />
    <path d="M790 780L852 935 1801 772 1788 585z" fill="url(#gSide)" />
    <path d="M797 797L848 928Q872 995 935 1065" fill="none" stroke="#4a3038" strokeWidth="1.600" opacity=".75" />
    <path d="M1790 586L1798 690" fill="none" stroke="#333" strokeWidth="3" strokeDasharray="9 15" />
    <ellipse cx="1282" cy="645" rx="511" ry="337" transform="rotate(-12 1282 645)" fill="#d93b80" />
    <g fill="none" stroke="#5a2047" strokeOpacity=".32" strokeWidth="1.800">
      <ellipse cx="1320" cy="813.500" rx="437" ry="306" transform="rotate(-12 1320 813.500)" />
      <ellipse cx="1318" cy="807.500" rx="388" ry="270" transform="rotate(-12 1318 807.500)" />
      <ellipse cx="1320" cy="820" rx="484" ry="342" transform="rotate(-12 1320 820)" />
    </g>
    <ellipse cx="1313" cy="785" rx="9" ry="10" fill="#8a1f5e" />
  </ModelCanvas>
);

/* ---------- data ---------- */
const toolGroups = [
  { label: "SKETCH", w: 354, gap: 28, icons: [IconNewSketch, IconSpline, IconRect, IconLine], pr: 8 },
  { label: "CREATE", w: 183, gap: 29, pl: 6, icons: [IconExtrude, IconForm] },
  { label: "MODIFY", w: 149, icons: [IconModify], lp: 4 },
  { label: "ASSEMBLE", w: 184, icons: [IconAssemble, IconJoint], lp: 3 },
  { label: "CONSTRUCT", w: 198, icons: [IconConstruct], lp: 3 },
  { label: "INSPECT", w: 147, icons: [IconInspect], lp: 5 },
  { label: "INSERT", w: 138, icons: [IconInsert], lp: 4 },
  { label: "MAKE", w: 119, icons: [IconMake], lp: 7 },
  { label: "ADD-INS", w: 158, icons: [IconAddIns], lp: 4 },
  { label: "SELECT", w: 140, icons: [IconSelect], last: true, lp: 5 },
];
const L = { s: TSketch, e: TExtrude, c: TCombine, k: TCoil, r: TRevolve, i: TImage, m: TMove, d: TDots };
const timeline = "eeecekkserisesemmmemcmemcmemcmemcd".split("");

export default function App() {
  return (
    <Page>
      <Global />
      <Defs />
      <TabBar>
        <Tab $w={378} $pl={0}>
          <TabCube dim w={30} />
          <TabTitle $ml={21}>Untitled*</TabTitle>
          <TabRight $pr={12}><CloseX c="#8a8a8a" /></TabRight>
        </Tab>
        <Tab $w={400} $pl={20} $active>
          <TabCube />
          <TabTitle $ml={19} $active>Kiss Lipbalm v1*</TabTitle>
          <TabRight $pr={12}>
            <Ico width="17" height="17" viewBox="0 0 17 17"><circle cx="8.500" cy="8.500" r="7" fill="none" stroke="#3bb89a" strokeWidth="2" /></Ico>
            <CloseX />
          </TabRight>
        </Tab>
        <AddTab>
          <Ico width="20" height="20" viewBox="0 0 20 20"><path d="M10 0v20M0 10h20" stroke="#7c7c7c" strokeWidth="3" /></Ico>
        </AddTab>
      </TabBar>

      <Workspace>
        <ModelDrawing />
        <ViewCube />
        <Toolbar>
          <ModelButton>MODEL<Tri $c="#ffffff" $w={18} $h={14} /></ModelButton>
          {toolGroups.map(g => (
            <Group key={g.label} $w={g.w} $last={g.last}>
              <IconRow $gap={g.gap} $pl={g.pl}>
                {g.icons.map((I, k) => <I key={k} />)}
              </IconRow>
              <GroupLabel $pr={g.pr} $lp={g.lp}>{g.label}<Tri /></GroupLabel>
            </Group>
          ))}
        </Toolbar>

        <Panel $mt={8}>
          <Ico width="15" height="14" viewBox="0 0 15 14"><path d="M7 0v14L0 7zM15 0v14L8 7z" fill="#333" /></Ico>
          <PanelTitle $ml={26}>BROWSER</PanelTitle>
          <Pill />
          <Grip />
        </Panel>

        <Tree>
          <TreeLine $level={0}>
            <ToggleSlot><Open /></ToggleSlot>
            <RootRow>
              <RootInner><Bulb /><TreeCube /><RootText>Kiss Lipbalm v1</RootText></RootInner>
              <Radio />
            </RootRow>
          </TreeLine>
          <TreeLine $level={1}>
            <ToggleSlot><Closed /></ToggleSlot>
            <Row $w={284} $pl={6}><Gear /><RowText>Document Settings</RowText></Row>
          </TreeLine>
          <TreeLine $level={1}>
            <ToggleSlot><Closed /></ToggleSlot>
            <Row $w={228} $pl={7}><Folder /><RowText>Named Views</RowText></Row>
          </TreeLine>
          <TreeLine $level={1}>
            <ToggleSlot><Closed /></ToggleSlot>
            <Row $w={198}><Bulb blue /><Folder /><RowText>Origin</RowText></Row>
          </TreeLine>
          <TreeLine $level={1}>
            <ToggleSlot><Open /></ToggleSlot>
            <Row $w={206}>
              <Bulb /><Folder /><RowText>Bodies</RowText>
              <Squiggle viewBox="0 0 153 10">
                {Array.from({ length: 13 }, (_, i) => (<path key={i} d={`M${i * 12.400 + 1} 9l5-7`} stroke="#6e8bb5" strokeWidth="3.500" />))}
              </Squiggle>
            </Row>
          </TreeLine>
          <TreeLine $level={2}>
            <ToggleSlot />
            <Row $w={198} $pl={13}><Bulb /><Cylinder /><RowText>Body1</RowText></Row>
          </TreeLine>
          <TreeLine $level={1}>
            <ToggleSlot><Open /></ToggleSlot>
            <Row $w={230}><Bulb /><Folder /><RowText>Sketches</RowText></Row>
          </TreeLine>
          <TreeLine $level={2}>
            <ToggleSlot />
            <Row $w={222} $pl={13}><Bulb /><TreeSketch /><RowText>Sketch1</RowText></Row>
          </TreeLine>
        </Tree>

        <Grow />

        <BottomRow>
          <Panel>
            <PanelTitle $ml={40} $fs={22.5}>COMMENTS</PanelTitle>
            <Pill $plus />
            <Grip />
          </Panel>
          <NavBars>
            <NavGroup $w={289} $pl={7}>
              <NavOrbit />
              <NavItem $ml={10}><Tri $w={17} $h={11} /></NavItem>
              <NavItem $ml={9}><NavLook /></NavItem>
              <NavItem $ml={23}><NavHand /></NavItem>
              <NavItem $ml={22}><NavZoom /></NavItem>
              <NavItem $ml={21}><NavZoomWin /></NavItem>
              <NavItem $ml={10}><Tri $w={18} $h={11} /></NavItem>
            </NavGroup>
            <NavGroup $w={187} $pl={8}>
              <NavMonitor />
              <NavItem $ml={5}><Tri $w={18} $h={11} /></NavItem>
              <NavItem $ml={9}><NavGrid /></NavItem>
              <NavItem $ml={6}><Tri $w={18} $h={11} /></NavItem>
              <NavItem $ml={9}><NavViews /></NavItem>
              <NavItem $ml={6}><Tri $w={18} $h={11} /></NavItem>
            </NavGroup>
          </NavBars>
        </BottomRow>
      </Workspace>

      <Timeline>
        <Controls>
          <Ico width="24" height="28" viewBox="0 0 24 28"><path d="M24 0v28L6 14zM0 0h4v28H0z" fill="#444" /></Ico>
          <Ico width="25" height="28" viewBox="0 0 25 28"><path d="M0 14L15 0v28zM19 9h5v11h-5z" fill="#444" /></Ico>
          <Ico width="23" height="28" viewBox="0 0 23 28"><path d="M0 0l23 14L0 28z" fill="#444" /></Ico>
          <Ico width="25" height="28" viewBox="0 0 25 28"><path d="M25 14L10 0v28zM0 9h5v11H0z" fill="#444" /></Ico>
          <Ico width="24" height="28" viewBox="0 0 24 28"><path d="M0 0v28l18-14zM20 0h4v28h-4z" fill="#444" /></Ico>
        </Controls>
        <Track>
          <Cell><CellIcon><TSketch active /></CellIcon><Tick /></Cell>
          <Cell><CellIcon><TExtrude active /></CellIcon><Tick /></Cell>
          {timeline.map((k, i) => {
            const I = L[k];
            return (
              <Cell key={i}>
                <CellIcon $ghost><I /></CellIcon>
                <Tick $hide={k === "d"} />
              </Cell>
            );
          })}
          <Playhead viewBox="0 0 24 62">
            <path d="M0 0h24v9L12 18 0 9z" fill="#626262" /><rect x="10" y="14" width="4" height="46" fill="#626262" />
          </Playhead>
          <PlusHandle />
        </Track>
        <TimelineGear><Gear size={32} fill="#555" hole="#cbcbcb" /></TimelineGear>
      </Timeline>
    </Page>
  );
}
